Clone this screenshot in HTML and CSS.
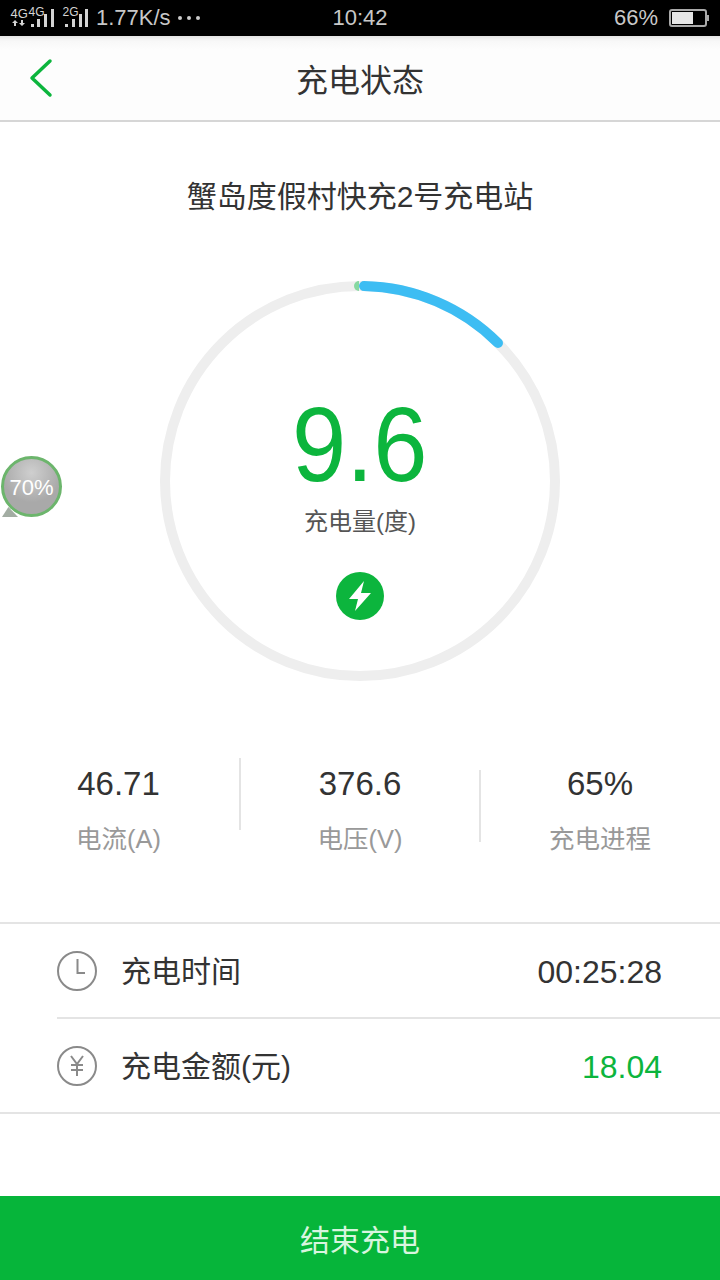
FILE: index.html
```html
<!DOCTYPE html>
<html lang="zh">
  <head>
    <meta charset="UTF-8" />
    <meta name="viewport" content="width=device-width, initial-scale=1.0" />
    <title>充电状态</title>
    <link rel="stylesheet" href="styles.css">
  </head>
  <body>
    <div class="statusbar">
      <div class="status-left">
        <svg class="signal" width="90" height="36" viewBox="0 0 90 36">
          <g fill="#d4d4d4">
            <rect x="31" y="24" width="3" height="3" />
            <rect x="37" y="19" width="3" height="8" />
            <rect x="44" y="14" width="3" height="13" />
            <rect x="51" y="9" width="3" height="18" />
            <rect x="65" y="24" width="3" height="3" />
            <rect x="72" y="19" width="3" height="8" />
            <rect x="79" y="14" width="3" height="13" />
            <rect x="85" y="9" width="3" height="18" />
            <path d="M15 20l3 3h-2v3h-2v-3h-2zM22 26l-3-3h2v-3h2v3h2z" />
          </g>
          <text x="10.5" y="18" class="net big">4G</text>
          <text x="28.5" y="16" class="net">4G</text>
          <text x="62.5" y="16" class="net">2G</text>
        </svg>
        <span class="speed">1.77K/s</span>
        <span class="dots"><i></i><i></i><i></i></span>
      </div>
      <span class="clock">10:42</span>
      <div class="status-right">
        <span>66%</span>
        <div class="battery"><div class="battery-fill"></div></div>
      </div>
    </div>

    <header class="navbar">
      <svg class="back" width="24" height="40" viewBox="0 0 24 40">
        <path d="M21 3 L3 20 L21 37" />
      </svg>
      <h1>充电状态</h1>
    </header>

    <h2 class="station">蟹岛度假村快充2号充电站</h2>

    <div class="gauge">
      <svg class="ring" width="400" height="400" viewBox="0 0 400 400">
        <circle class="ring-track" cx="200" cy="200" r="195" />
        <path class="ring-start" d="M199 0 A5 5 0 0 0 199 10 Z" />
        <path class="ring-progress" d="M204 5 A195 195 0 0 1 338 62" />
      </svg>
      <div class="gauge-text">
        <div class="amount">9.6</div>
        <div class="amount-label">充电量(度)</div>
        <svg class="bolt" width="48" height="48" viewBox="0 0 48 48">
          <circle cx="24" cy="24" r="24" fill="#0cb53d" />
          <path d="M28 9 L13 27 H22 L19 39 L35 21 H25 Z" fill="#fff" />
        </svg>
      </div>
    </div>

    <div class="stats">
      <div class="stat stat-first">
        <div class="stat-value">46.71</div>
        <div class="stat-label">电流(A)</div>
      </div>
      <div class="stat stat-mid">
        <div class="stat-value">376.6</div>
        <div class="stat-label">电压(V)</div>
      </div>
      <div class="stat stat-last">
        <div class="stat-value">65%</div>
        <div class="stat-label">充电进程</div>
      </div>
    </div>

    <div class="rows">
      <div class="row row-first">
        <svg class="row-icon" width="40" height="40" viewBox="0 0 40 40">
          <circle cx="20" cy="20" r="19" />
          <path d="M20.5 8 V22 H28" />
        </svg>
        <span class="row-name">充电时间</span>
        <span class="row-value">00:25:28</span>
      </div>
      <div class="row row-second">
        <svg class="row-icon" width="40" height="40" viewBox="0 0 40 40">
          <circle cx="20" cy="20" r="19" />
          <path d="M14 10 L20 18 L26 10 M20 18 V30 M14 19 H26 M14 24 H26" />
        </svg>
        <span class="row-name">充电金额(元)</span>
        <span class="row-value row-money">18.04</span>
      </div>
    </div>

    <button class="stop">结束充电</button>

    <div class="bubble">70%</div>
  </body>
</html>
```

FILE: styles.css
```css
* {
  box-sizing: border-box;
}
html,
body {
  margin: 0;
  padding: 0;
}
body {
  width: 720px;
  height: 1280px;
  position: relative;
  overflow: hidden;
  background: #fff;
  font-family: "Liberation Sans", "Noto Sans CJK SC", sans-serif;
  color: #333;
  display: flex;
  flex-direction: column;
}

/* status bar */
.statusbar {
  height: 36px;
  background: #000;
  color: #c8c8c8;
  display: grid;
  grid-template-columns: 1fr auto 1fr;
  align-items: center;
  font-size: 22px;
  flex: none;
}
.status-left {
  display: flex;
  align-items: center;
}
.signal {
  flex: none;
}
.net {
  font-size: 12px;
  fill: #d4d4d4;
  font-family: "Liberation Sans", sans-serif;
}
.net.big {
  font-size: 13px;
}
.speed {
  margin-left: 6px;
}
.dots {
  display: flex;
  gap: 5px;
  margin-left: 7px;
}
.dots i {
  width: 4px;
  height: 4px;
  border-radius: 50%;
  background: #ccc;
}
.status-right {
  display: flex;
  justify-content: flex-end;
  align-items: center;
  padding-right: 13px;
}
.battery {
  width: 38px;
  height: 18px;
  margin-left: 11px;
  border: 2px solid #aaa;
  border-radius: 3px;
  padding: 1px;
  position: relative;
}
.battery::after {
  content: "";
  position: absolute;
  right: -4px;
  top: 4px;
  width: 2px;
  height: 6px;
  background: #aaa;
}
.battery-fill {
  width: 66%;
  height: 100%;
  background: #e6e6e6;
}

/* nav */
.navbar {
  height: 86px;
  flex: none;
  display: flex;
  align-items: center;
  justify-content: center;
  position: relative;
  border-bottom: 2px solid #d6d6d6;
  background: linear-gradient(#e4e4e4, #f8f8f8 5px, #fdfdfd 14px);
}
.navbar h1 {
  margin: 0;
  font-size: 32px;
  font-weight: normal;
  color: #333;
}
.back {
  position: absolute;
  left: 29px;
  top: 22px;
}
.back path {
  fill: none;
  stroke: #0cb53d;
  stroke-width: 3.5;
  stroke-linecap: round;
  stroke-linejoin: round;
}

.station {
  margin: 55px 0 0;
  font-size: 30px;
  line-height: 40px;
  font-weight: normal;
  text-align: center;
  color: #333;
}

/* gauge */
.gauge {
  width: 400px;
  height: 400px;
  margin: 64px auto 0;
  position: relative;
  flex: none;
}
.ring {
  display: block;
}
.ring-track {
  fill: none;
  stroke: #eeeeee;
  stroke-width: 10;
}
.ring-progress {
  fill: none;
  stroke: #3dbdf3;
  stroke-width: 10;
  stroke-linecap: round;
}
.ring-start {
  fill: #86d8a0;
}
.gauge-text {
  position: absolute;
  left: 0;
  right: 0;
  top: 110px;
  display: flex;
  flex-direction: column;
  align-items: center;
}
.amount {
  font-size: 106px;
  line-height: 106px;
  color: #0cb53d;
  transform: scaleX(0.92);
}
.amount-label {
  margin-top: 9px;
  font-size: 24px;
  line-height: 32px;
  color: #555;
}
.bolt {
  margin-top: 34px;
}

/* stats */
.stats {
  display: grid;
  grid-template-columns: repeat(3, 1fr);
  margin-top: 78px;
  height: 163px;
  flex: none;
}
.stat {
  text-align: center;
  position: relative;
}
.stat-first {
  padding-right: 3px;
}
.stat-value {
  font-size: 33px;
  line-height: 50px;
  color: #333;
}
.stat-label {
  margin-top: 10px;
  font-size: 25.5px;
  line-height: 40px;
  color: #999;
}
.stat-mid::before,
.stat-last::before {
  content: "";
  position: absolute;
  left: -1px;
  width: 2px;
  height: 72px;
  background: #e4e4e4;
}
.stat-mid::before {
  top: -1px;
}
.stat-last::before {
  top: 11px;
}

/* rows */
.rows {
  border-top: 2px solid #e4e4e4;
  border-bottom: 2px solid #e4e4e4;
  flex: none;
}
.row {
  height: 95px;
  margin-left: 57px;
  padding-right: 58px;
  display: flex;
  align-items: center;
}
.row-first {
  border-bottom: 2px solid #e4e4e4;
}
.row-second {
  height: 93px;
}
.row-icon {
  flex: none;
  margin-right: 24px;
}
.row-icon circle,
.row-icon path {
  fill: none;
  stroke: #8a8a8a;
  stroke-width: 2;
}
.row-name {
  margin-bottom: 3px;
  font-size: 30px;
  color: #333;
}
.row-value {
  margin-left: auto;
  margin-top: 4px;
  font-size: 32px;
  color: #333;
}
.row-money {
  color: #0cb53d;
}

/* bottom */
.stop {
  margin-top: auto;
  height: 84px;
  flex: none;
  border: 0;
  width: 100%;
  background: #06b53a;
  color: #d8f5df;
  font-family: inherit;
  font-size: 30px;
}

.bubble {
  position: absolute;
  left: 1px;
  top: 456px;
  width: 61px;
  height: 61px;
  padding-top: 3px;
  border-radius: 50%;
  border: 3px solid #6cb56c;
  background: radial-gradient(circle at 50% 25%, #cfcfcf, #a9a9a9 60%);
  color: #fff;
  font-size: 22px;
  display: flex;
  align-items: center;
  justify-content: center;
}
.bubble::before {
  content: "";
  position: absolute;
  left: -2px;
  bottom: -3px;
  width: 16px;
  height: 10px;
  z-index: -1;
  background: #a3ada3;
  clip-path: polygon(40% 0, 100% 100%, 0 100%);
}
```
